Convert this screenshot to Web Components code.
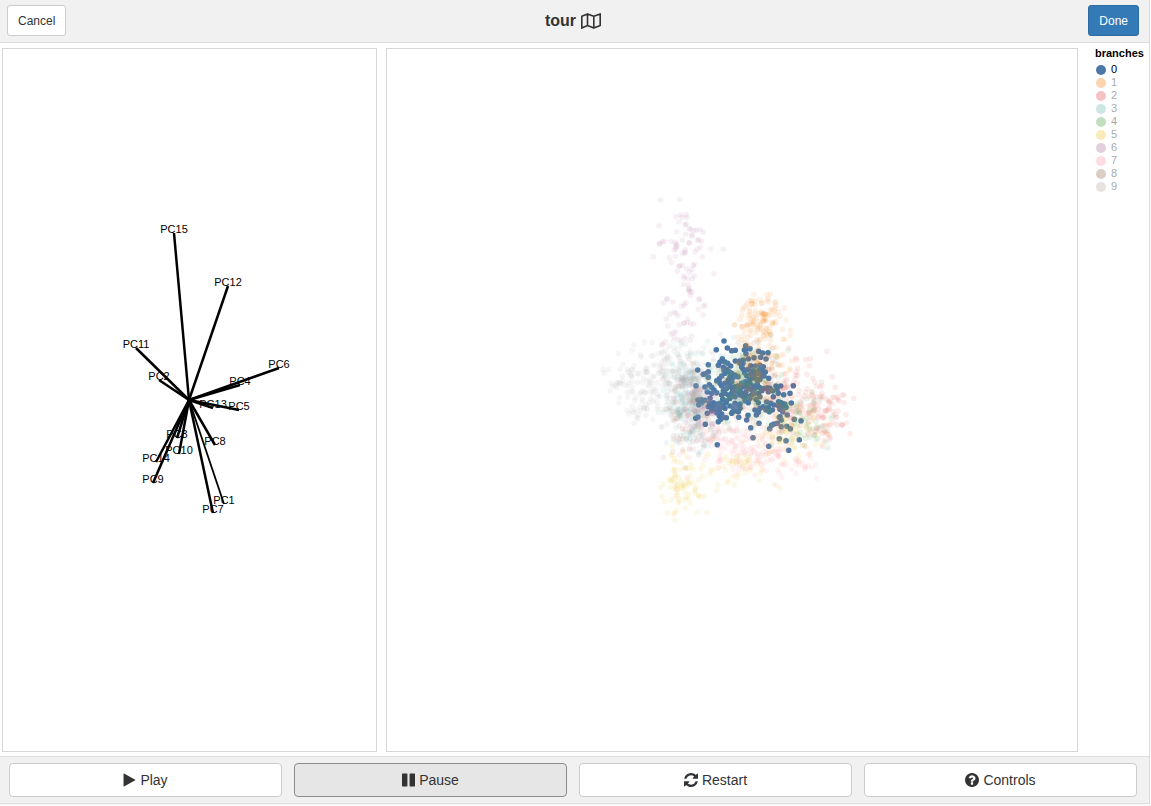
<!DOCTYPE html>
<html lang="en">
<head>
<meta charset="utf-8">
<title>tour</title>
<style>
html, body { height: 100%; }
body { margin: 0; background: #f9f9f9; color: #333; font-family: "Liberation Sans", Arial, Helvetica, sans-serif; }
</style>
</head>
<body>
<tour-app></tour-app>
<script>
const ICONS = {
  play: 'M1576 927l-1328 738q-23 13-39.500 3t-16.500-36v-1472q0-26 16.500-36t39.500 3l1328 738q23 13 23 31t-23 31z',
  pause: 'M1664 192v1408q0 26-19 45t-45 19h-512q-26 0-45-19t-19-45v-1408q0-26 19-45t45-19h512q26 0 45 19t19 45zm-896 0v1408q0 26-19 45t-45 19h-512q-26 0-45-19t-19-45v-1408q0-26 19-45t45-19h512q26 0 45 19t19 45z',
  refresh: 'M1639 1056q0 5-1 7-64 268-268 434.5t-478 166.5q-146 0-282.5-55t-243.5-157l-129 129q-19 19-45 19t-45-19-19-45v-448q0-26 19-45t45-19h448q26 0 45 19t19 45-19 45l-137 137q71 66 161 102t187 36q134 0 250-65t186-179q11-17 53-117 8-23 30-23h192q13 0 22.5 9.5t9.5 22.5zm25-800v448q0 26-19 45t-45 19h-448q-26 0-45-19t-19-45 19-45l138-138q-148-137-349-137-134 0-250 65t-186 179q-11 17-53 117-8 23-30 23h-199q-13 0-22.5-9.5t-9.5-22.5v-7q65-268 270-434.5t480-166.5q146 0 284 55.5t245 156.5l130-129q19-19 45-19t45 19 19 45z',
  help: 'M1024 1376v-192q0-14-9-23t-23-9h-192q-14 0-23 9t-9 23v192q0 14 9 23t23 9h192q14 0 23-9t9-23zm256-672q0-88-55.5-163t-138.5-116-170-41q-243 0-371 213-15 24 8 42l132 100q7 6 19 6 16 0 25-12 53-68 86-92 34-24 86-24 48 0 85.5 26t37.5 59q0 38-20 61t-68 45q-63 28-115.5 86.5t-52.5 125.5v36q0 14 9 23t23 9h192q14 0 23-9t9-23q0-19 21.5-49.5t54.5-49.5q32-18 49-28.5t46-35 44.5-48 28-60.5 12.5-81zm384 192q0 209-103 385.5t-279.5 279.5-385.5 103-385.5-103-279.5-279.5-103-385.5 103-385.5 279.5-279.5 385.5-103 385.5 103 279.5 279.5 103 385.5z'
};
const PALETTE = ['#4c78a8', '#f58518', '#e45756', '#72b7b2', '#54a24b', '#eeca3b', '#b279a2', '#ff9da6', '#9d755d', '#bab0ac'];

class FaIcon extends HTMLElement {
  connectedCallback() {
    this.attachShadow({ mode: 'open' }).innerHTML = `
      <style>:host { display: block; width: 13px; height: 14px; } :host([wide]) { width: 14px; } svg { display: block; width: 100%; height: 100%; overflow: visible; }</style>
      <svg viewBox="128 128 1536 1536" fill="currentColor" aria-hidden="true"><path d="${ICONS[this.getAttribute('name')]}"/></svg>`;
  }
}
customElements.define('fa-icon', FaIcon);

class TourButton extends HTMLElement {
  connectedCallback() {
    const pressed = this.hasAttribute('active') ? ' aria-pressed="true"' : '';
    this.attachShadow({ mode: 'open' }).innerHTML = `
      <style>
        :host { display: block; }
        button { display: flex; align-items: center; justify-content: center; gap: 4px; box-sizing: border-box; width: 100%; height: 34px; padding: 0 10px; border: 1px solid #ccc; border-radius: 4px; background: #fff; color: #333; font: 14px/20px "Liberation Sans", Arial, sans-serif; }
        :host([size="small"]) button { height: 31px; border-radius: 3px; font-size: 12px; }
        :host([primary]) button { background: #337ab7; border-color: #2e6da4; color: #fff; }
        :host([active]) button { background: #e6e6e6; border-color: #8c8c8c; }
      </style>
      <button type="button"${pressed}><slot name="icon"></slot><slot></slot></button>`;
  }
}
customElements.define('tour-button', TourButton);

class TourHeader extends HTMLElement {
  connectedCallback() {
    this.attachShadow({ mode: 'open' }).innerHTML = `
      <style>
        :host { display: grid; grid-template-columns: 1fr auto 1fr; align-items: center; height: 42px; padding: 0 10px 0 7px; background: #f1f1f1; border-bottom: 1px solid #ddd; }
        .end { justify-self: end; } .start { justify-self: start; }
        h1 { display: flex; align-items: center; gap: 5px; margin: 0; font-size: 16px; line-height: 18px; font-weight: bold; }
        svg { display: block; }
        h1, .start, .end { padding-bottom: 1px; }
      </style>
      <div class="start"><slot name="start"></slot></div>
      <h1><slot></slot>
        <svg width="20" height="16" viewBox="0 0 20 16" fill="none" stroke="currentColor" stroke-width="1.600" stroke-linejoin="round" aria-hidden="true">
          <path d="M.8 3.300L6.500.9l6.300 2.400 6.400-2.400v11.700l-6.400 2.500-6.300-2.500-5.700 2.500zM6.500.9v11.700M12.800 3.300v11.800"/>
        </svg>
      </h1>
      <div class="end"><slot name="end"></slot></div>`;
  }
}
customElements.define('tour-header', TourHeader);

const PANEL_STYLE = `:host { display: block; box-sizing: border-box; min-width: 0; min-height: 0; border: 1px solid #d6d6d6; background: #fff; }
  svg { display: block; width: 100%; height: 100%; }`;

class TourAxes extends HTMLElement {
  connectedCallback() {
    const origin = [189, 400];
    const axes = [
      ['PC15', 174, 233], ['PC12', 228, 286], ['PC11', 136, 348], ['PC6', 279, 368], ['PC2', 159, 380],
      ['PC4', 240, 385], ['PC5', 239, 410], ['PC13', 213, 408], ['PC3', 177, 438], ['PC8', 215, 445],
      ['PC10', 179, 454], ['PC14', 156, 462], ['PC9', 153, 483], ['PC1', 224, 504], ['PC7', 213, 513]
    ];
    const lines = axes.map(([name, x, y]) => `<line${name === 'PC1' ? ' class="thin"' : ''} x1="${origin[0]}" y1="${origin[1]}" x2="${x}" y2="${y}"/>`).join('');
    const labels = axes.map(([name, x, y]) => `<text x="${x}" y="${y}">${name}</text>`).join('');
    this.attachShadow({ mode: 'open' }).innerHTML = `
      <style>${PANEL_STYLE}
        line { stroke: #000; stroke-width: 2.5; }
        .thin { stroke-width: 1.8; }
        text { fill: #000; font: 11px "Liberation Sans", Arial, sans-serif; text-anchor: middle; }
      </style>
      <svg viewBox="3 49 373 702" role="img" aria-label="Projection axes">${lines}${labels}</svg>`;
  }
}
customElements.define('tour-axes', TourAxes);

/* Points of the selected branch, in thirds of a unit from (680, 280). */
const SELECTED = `132,183 109,209 142,204 155,212 166,211 197,197 198,207 210,206 236,214 264,218 248,219 193,210 127,236 120,246 134,245 115,256 85,254 53,270 85,275 70,283 78,281 85,292 48,317 143,250 152,258 166,243 179,243 190,240 205,236 222,233 242,232 258,237 198,221 189,250 180,250 130,262 140,268 148,275 135,280 125,288 118,296 110,302 132,272 212,257 226,258 240,256 250,260 238,270 247,274 256,276 230,278 244,286 252,288 220,272 205,268 212,282 200,287 215,295 230,298 240,298 266,295 194,278 222,288 208,300 235,280 155,280 165,285 174,290 160,292 150,290 185,262 190,268 145,300 155,305 135,310 125,318 148,312 140,325 130,332 120,310 165,320 175,318 185,310 195,305 190,320 180,330 170,335 158,330 152,320 200,315 210,310 220,318 232,312 205,325 198,335 215,330 225,325 238,322 245,332 252,325 262,323 270,325 278,333 265,335 288,318 302,318 291,328 340,317 330,340 311,344 295,340 280,350 75,321 88,314 95,322 102,330 82,336 95,340 110,338 125,345 135,340 145,345 155,340 165,350 150,355 128,358 140,362 180,345 190,350 200,348 210,355 195,362 205,368 185,340 215,345 222,340 235,340 240,350 228,358 235,368 260,366 54,360 64,359 74,361 56,374 65,368 90,355 88,368 100,368 110,372 95,378 103,382 85,380 112,385 120,370 130,375 138,368 125,382 118,390 135,385 95,392 82,400 100,390 110,398 118,408 125,402 139,413 115,425 122,418 128,412 54,411 47,415 76,433 160,380 170,378 180,385 165,392 158,395 175,395 165,370 150,378 180,372 176,412 204,406 200,420 155,400 225,390 235,397 229,405 240,385 250,380 258,390 265,382 268,395 277,390 282,375 272,370 296,365 305,375 314,372 310,385 300,388 318,382 308,395 304,368 334,369 296,378 322,405 300,410 304,420 298,412 363,422 343,418 282,432 292,430 304,440 320,439 331,446 269,446 275,436 237,430 212,443 219,473 112,494 298,476 318,482 358,479 266,499 326,511`;
/* The long upper arm of branch 6, in thirds of a unit from (590, 190). */
const ARM = `211,30 269,28 257,80 271,75 288,74 291,82 276,82 267,96 288,102 286,104 207,107 260,125 298,115 302,118 287,133 305,135 306,138 320,120 331,119 340,127 312,122 277,150 297,158 298,159 322,149 326,151 335,154 243,154 223,154 209,160 208,162 217,156 256,157 258,162 262,167 257,176 253,180 259,171 286,179 284,187 277,190 286,189 315,185 322,176 331,172 362,177 400,177 190,200 237,203 245,217 256,199 337,200 268,228 277,226 268,229 310,226 314,223 290,236 306,238 263,244 299,247 372,251 283,258 313,258 282,264 294,267 307,266 281,283 295,285 296,299 297,302 301,306 306,307 297,295 301,317 328,326 328,329 232,326 230,328 220,339 248,336 288,338 282,344 275,349 346,345 340,349 325,358 339,374 253,366 240,372 257,370 265,377 229,386 293,386 234,408 267,404 281,399 282,400 293,397 302,402 311,402 250,429 258,425 242,432 253,442 305,438 285,446 270,450 301,451 226,455 218,462 215,466`;
/* Clouds: branch, count, centre x, centre y, spread x, spread y. */
const CLOUDS = [
  [1, 105, 761, 319, 13, 12], [1, 110, 760, 362, 15, 26],
  [2, 120, 790, 394, 24, 22], [2, 75, 821, 416, 17, 17],
  [3, 190, 689, 402, 14, 26], [3, 50, 735, 385, 20, 22],
  [4, 130, 748, 385, 18, 19], [4, 65, 800, 418, 17, 18],
  [5, 80, 681, 485, 12, 16], [5, 85, 788, 432, 19, 13], [5, 55, 725, 464, 27, 12],
  [6, 100, 704, 405, 14, 20],
  [7, 160, 742, 444, 30, 17], [7, 45, 785, 462, 23, 12],
  [8, 110, 692, 412, 13, 25], [8, 110, 752, 384, 16, 20],
  [9, 160, 650, 386, 21, 20], [9, 100, 687, 384, 17, 25]
];

class TourScatter extends HTMLElement {
  connectedCallback() {
    let seed = 71933;
    const random = () => (seed = (seed * 16807) % 2147483647) / 2147483647;
    const normal = () => {
      let n;
      do { n = Math.sqrt(-2 * Math.log(random())) * Math.cos(2 * Math.PI * random()); } while (Math.abs(n) > 2.3);
      return n;
    };
    const dot = (x, y, branch) => `<circle cx="${x.toFixed(1)}" cy="${y.toFixed(1)}" r="2.800" fill="${PALETTE[branch]}"/>`;
    const parse = (text, ox, oy, branch) => text.split(' ').map(p => {
      const [x, y] = p.split(',').map(Number);
      return dot(ox + x / 3, oy + y / 3, branch);
    }).join('');
    const faint = [];
    for (const [branch, count, cx, cy, sx, sy] of CLOUDS)
      for (let i = 0; i < count; i++) faint.push(dot(cx + normal() * sx, cy + normal() * sy, branch));
    for (let i = faint.length - 1; i > 0; i--) {
      const j = Math.floor(random() * (i + 1));
      [faint[i], faint[j]] = [faint[j], faint[i]];
    }
    this.attachShadow({ mode: 'open' }).innerHTML = `
      <style>${PANEL_STYLE} .faint circle { opacity: .11; }</style>
      <svg viewBox="387 49 690 702" role="img" aria-label="Projected data"><g>${parse(SELECTED, 680, 280, 0)}</g><g class="faint">${parse(ARM, 590, 190, 6)}${faint.join('')}</g></svg>`;
  }
}
customElements.define('tour-scatter', TourScatter);

class TourLegend extends HTMLElement {
  connectedCallback() {
    const rows = PALETTE.map((c, i) => `<li${i ? ' class="off"' : ''}><i style="background:${c}"></i>${i}</li>`).join('');
    this.attachShadow({ mode: 'open' }).innerHTML = `
      <style>
        :host { display: block; color: #000; font-size: 11px; line-height: 13px; }
        h2 { margin: 0 0 4px; font-size: 11px; line-height: 11px; }
        ul { margin: 0; padding: 0 0 0 1px; list-style: none; }
        li { display: flex; align-items: center; gap: 5px; height: 13px; }
        .off { opacity: .35; }
        i { width: 10px; height: 10px; border-radius: 50%; }
      </style>
      <h2>branches</h2><ul>${rows}</ul>`;
  }
}
customElements.define('tour-legend', TourLegend);

class TourApp extends HTMLElement {
  connectedCallback() {
    this.attachShadow({ mode: 'open' }).innerHTML = `
      <style>
        :host { display: grid; grid-template-rows: auto 1fr auto; box-sizing: border-box; height: calc(100vh - 2px); margin-right: 1px; border: solid #ddd; border-width: 0 1px 1px 0; background: #fff; }
        main { display: grid; grid-template-columns: 375fr 692fr 62px; gap: 9px; min-height: 0; padding: 5px 0 4px 2px; }
        tour-legend { margin-left: 8px; }
        footer { display: grid; grid-template-columns: repeat(4, 1fr); gap: 12px; padding: 6px 12px 6px 9px; background: #f1f1f1; border-top: 1px solid #ddd; }
      </style>
      <tour-header>
        <tour-button slot="start" size="small">Cancel</tour-button>
        tour
        <tour-button slot="end" size="small" primary>Done</tour-button>
      </tour-header>
      <main><tour-axes></tour-axes><tour-scatter></tour-scatter><tour-legend></tour-legend></main>
      <footer>
        <tour-button><fa-icon slot="icon" name="play"></fa-icon>Play</tour-button>
        <tour-button active><fa-icon slot="icon" name="pause"></fa-icon>Pause</tour-button>
        <tour-button><fa-icon slot="icon" wide name="refresh"></fa-icon>Restart</tour-button>
        <tour-button><fa-icon slot="icon" wide name="help"></fa-icon>Controls</tour-button>
      </footer>`;
  }
}
customElements.define('tour-app', TourApp);
</script>
</body>
</html>
